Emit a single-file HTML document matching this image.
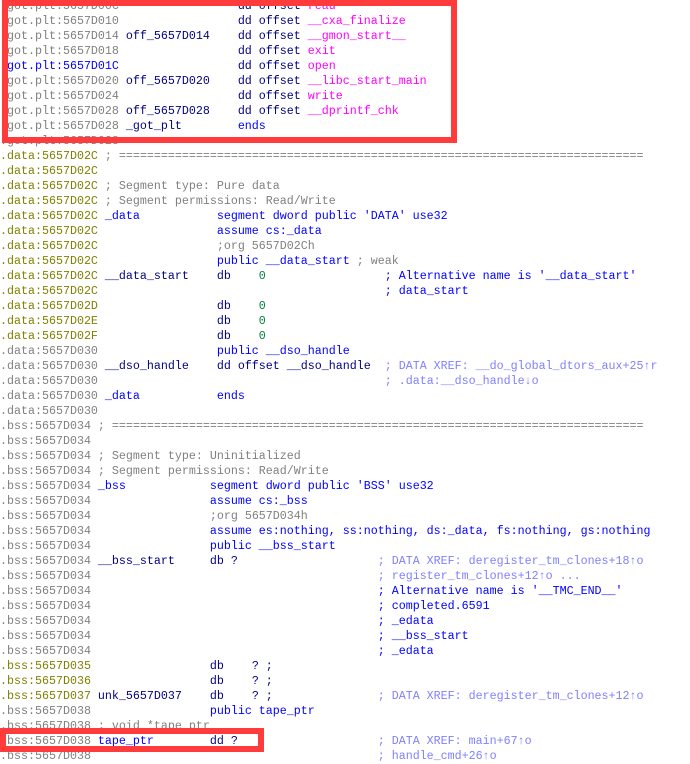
<!DOCTYPE html>
<html><head><meta charset="utf-8">
<style>
html,body{margin:0;padding:0;background:#fff;width:690px;height:754px;overflow:hidden}
#v{position:absolute;left:0;top:-1px;font-family:"Liberation Mono",monospace;font-size:11.67px;line-height:15px}
.l{position:relative;height:15px}
.l span{position:absolute;top:0;white-space:pre}
.a{color:#808080;left:0}
.o{color:#808000;left:0}
.ab{color:#0000ff;left:0}
.n{color:#000080}
.b{color:#0000ff}
.m{color:#ff00ff}
.g{color:#008040}
.x{color:#8080ff}
.s{color:#808080}
i{font-style:normal}
.box{position:absolute;border:6px solid #ff3b3b;box-sizing:border-box}
</style></head><body>
<div id="v"><div class="l"><span class="a">.got.plt:5657D00C</span><span class="n" style="left:34ch">dd offset <i class="m">read</i></span></div><div class="l"><span class="a">.got.plt:5657D010</span><span class="n" style="left:34ch">dd offset <i class="m">__cxa_finalize</i></span></div><div class="l"><span class="a">.got.plt:5657D014</span><span class="n" style="left:18ch">off_5657D014</span><span class="n" style="left:34ch">dd offset <i class="m">__gmon_start__</i></span></div><div class="l"><span class="a">.got.plt:5657D018</span><span class="n" style="left:34ch">dd offset <i class="m">exit</i></span></div><div class="l"><span class="ab">.got.plt:5657D01C</span><span class="n" style="left:34ch">dd offset <i class="m">open</i></span></div><div class="l"><span class="a">.got.plt:5657D020</span><span class="n" style="left:18ch">off_5657D020</span><span class="n" style="left:34ch">dd offset <i class="m">__libc_start_main</i></span></div><div class="l"><span class="a">.got.plt:5657D024</span><span class="n" style="left:34ch">dd offset <i class="m">write</i></span></div><div class="l"><span class="a">.got.plt:5657D028</span><span class="n" style="left:18ch">off_5657D028</span><span class="n" style="left:34ch">dd offset <i class="m">__dprintf_chk</i></span></div><div class="l"><span class="a">.got.plt:5657D028</span><span class="n" style="left:18ch">_got_plt</span><span class="b" style="left:34ch">ends</span></div><div class="l"><span class="a">.got.plt:5657D028</span></div><div class="l"><span class="o">.data:5657D02C</span><span class="s" style="left:15ch">; ===========================================================================</span></div><div class="l"><span class="o">.data:5657D02C</span></div><div class="l"><span class="o">.data:5657D02C</span><span class="s" style="left:15ch">; Segment type: Pure data</span></div><div class="l"><span class="o">.data:5657D02C</span><span class="s" style="left:15ch">; Segment permissions: Read/Write</span></div><div class="l"><span class="o">.data:5657D02C</span><span class="b" style="left:15ch">_data</span><span class="b" style="left:31ch">segment dword public 'DATA' use32</span></div><div class="l"><span class="o">.data:5657D02C</span><span class="b" style="left:31ch">assume cs:_data</span></div><div class="l"><span class="o">.data:5657D02C</span><span class="s" style="left:31ch">;org 5657D02Ch</span></div><div class="l"><span class="o">.data:5657D02C</span><span class="b" style="left:31ch">public __data_start <i class="s">; weak</i></span></div><div class="l"><span class="o">.data:5657D02C</span><span class="n" style="left:15ch">__data_start</span><span class="n" style="left:31ch">db</span><span class="g" style="left:37ch">0</span><span class="b" style="left:55ch">; Alternative name is '__data_start'</span></div><div class="l"><span class="o">.data:5657D02C</span><span class="b" style="left:55ch">; data_start</span></div><div class="l"><span class="o">.data:5657D02D</span><span class="n" style="left:31ch">db</span><span class="g" style="left:37ch">0</span></div><div class="l"><span class="o">.data:5657D02E</span><span class="n" style="left:31ch">db</span><span class="g" style="left:37ch">0</span></div><div class="l"><span class="o">.data:5657D02F</span><span class="n" style="left:31ch">db</span><span class="g" style="left:37ch">0</span></div><div class="l"><span class="a">.data:5657D030</span><span class="b" style="left:31ch">public __dso_handle</span></div><div class="l"><span class="a">.data:5657D030</span><span class="n" style="left:15ch">__dso_handle</span><span class="n" style="left:31ch">dd offset __dso_handle</span><span class="x" style="left:55ch">; DATA XREF: __do_global_dtors_aux+25↑r</span></div><div class="l"><span class="a">.data:5657D030</span><span class="x" style="left:55ch">; .data:__dso_handle↓o</span></div><div class="l"><span class="a">.data:5657D030</span><span class="b" style="left:15ch">_data</span><span class="b" style="left:31ch">ends</span></div><div class="l"><span class="a">.data:5657D030</span></div><div class="l"><span class="a">.bss:5657D034</span><span class="s" style="left:14ch">; ============================================================================</span></div><div class="l"><span class="a">.bss:5657D034</span></div><div class="l"><span class="a">.bss:5657D034</span><span class="s" style="left:14ch">; Segment type: Uninitialized</span></div><div class="l"><span class="a">.bss:5657D034</span><span class="s" style="left:14ch">; Segment permissions: Read/Write</span></div><div class="l"><span class="a">.bss:5657D034</span><span class="b" style="left:14ch">_bss</span><span class="b" style="left:30ch">segment dword public 'BSS' use32</span></div><div class="l"><span class="a">.bss:5657D034</span><span class="b" style="left:30ch">assume cs:_bss</span></div><div class="l"><span class="a">.bss:5657D034</span><span class="s" style="left:30ch">;org 5657D034h</span></div><div class="l"><span class="a">.bss:5657D034</span><span class="b" style="left:30ch">assume es:nothing, ss:nothing, ds:_data, fs:nothing, gs:nothing</span></div><div class="l"><span class="a">.bss:5657D034</span><span class="b" style="left:30ch">public __bss_start</span></div><div class="l"><span class="a">.bss:5657D034</span><span class="n" style="left:14ch">__bss_start</span><span class="n" style="left:30ch">db ?</span><span class="x" style="left:54ch">; DATA XREF: deregister_tm_clones+18↑o</span></div><div class="l"><span class="a">.bss:5657D034</span><span class="x" style="left:54ch">; register_tm_clones+12↑o ...</span></div><div class="l"><span class="a">.bss:5657D034</span><span class="b" style="left:54ch">; Alternative name is '__TMC_END__'</span></div><div class="l"><span class="a">.bss:5657D034</span><span class="b" style="left:54ch">; completed.6591</span></div><div class="l"><span class="a">.bss:5657D034</span><span class="b" style="left:54ch">; _edata</span></div><div class="l"><span class="a">.bss:5657D034</span><span class="b" style="left:54ch">; __bss_start</span></div><div class="l"><span class="a">.bss:5657D034</span><span class="b" style="left:54ch">; _edata</span></div><div class="l"><span class="o">.bss:5657D035</span><span class="n" style="left:30ch">db    ? ;</span></div><div class="l"><span class="o">.bss:5657D036</span><span class="n" style="left:30ch">db    ? ;</span></div><div class="l"><span class="o">.bss:5657D037</span><span class="n" style="left:14ch">unk_5657D037</span><span class="n" style="left:30ch">db    ? ;</span><span class="x" style="left:54ch">; DATA XREF: deregister_tm_clones+12↑o</span></div><div class="l"><span class="a">.bss:5657D038</span><span class="b" style="left:30ch">public tape_ptr</span></div><div class="l"><span class="a">.bss:5657D038</span><span class="s" style="left:14ch">; void *tape_ptr</span></div><div class="l"><span class="a">.bss:5657D038</span><span class="b" style="left:14ch">tape_ptr</span><span class="n" style="left:30ch">dd ?</span><span class="x" style="left:54ch">; DATA XREF: main+67↑o</span></div><div class="l"><span class="a">.bss:5657D038</span><span class="x" style="left:54ch">; handle_cmd+26↑o</span></div></div>
<div class="box" style="left:2px;top:0;width:455px;height:143px"></div>
<div class="box" style="left:0;top:728px;width:264px;height:24px"></div>
</body></html>
